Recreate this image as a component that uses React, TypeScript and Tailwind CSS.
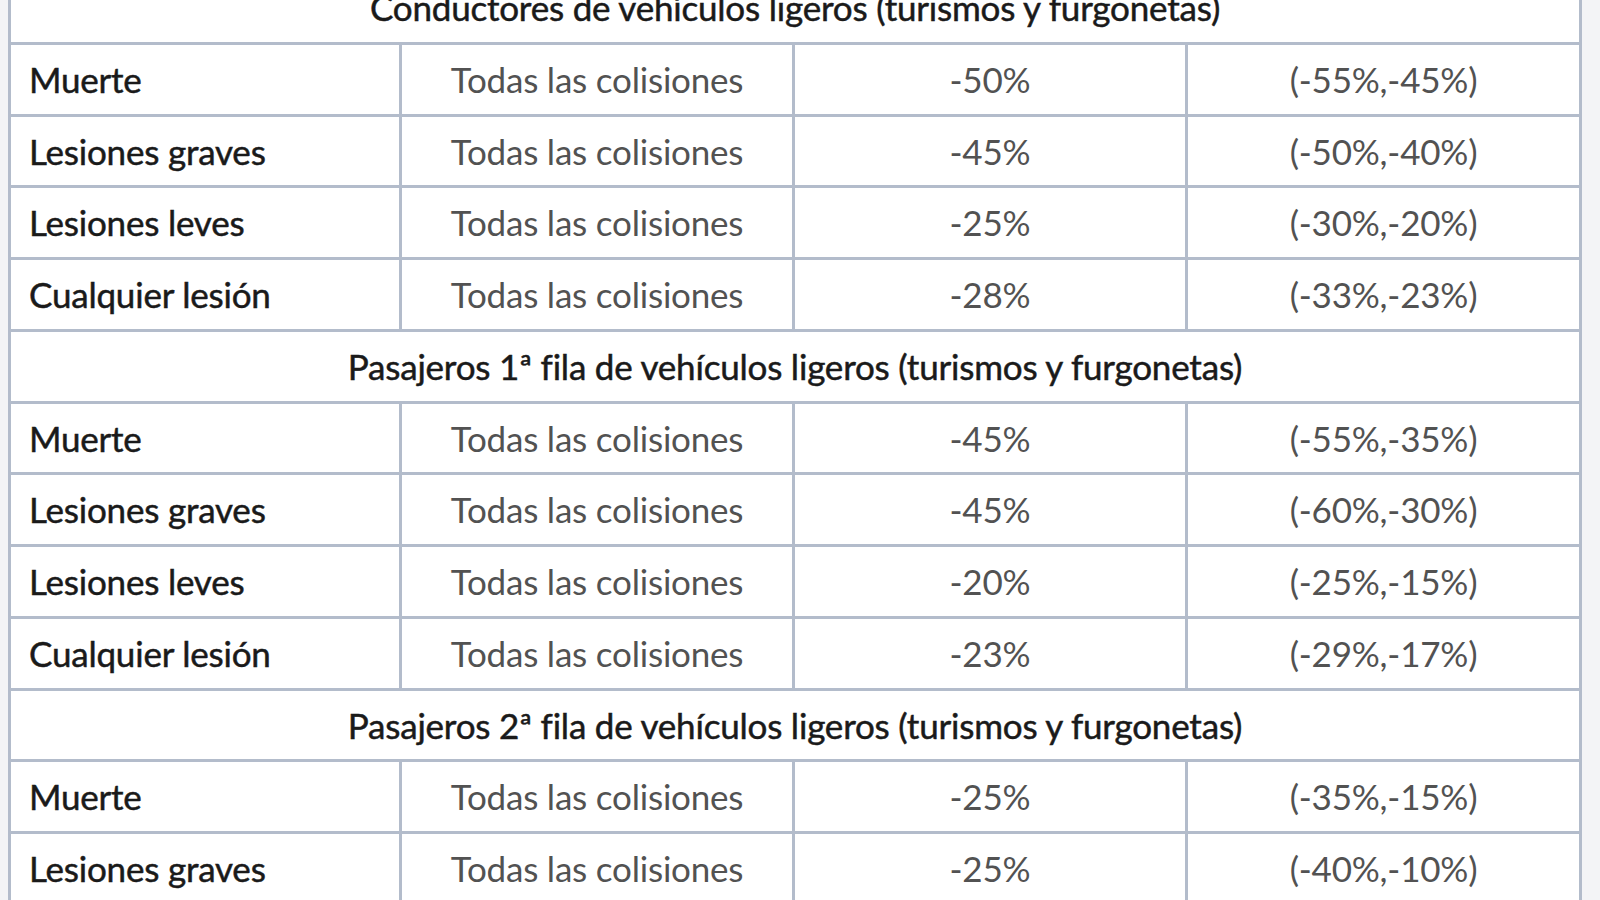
import React from "react";

type Row = { kind: "h"; title: React.ReactNode } | { kind: "d"; a: string; b: string; c: string; d: string };

const rows: Row[] = [
  { kind: "h", title: "Conductores de vehículos ligeros (turismos y furgonetas)" },
  { kind: "d", a: "Muerte", b: "Todas las colisiones", c: "-50%", d: "(-55%,-45%)" },
  { kind: "d", a: "Lesiones graves", b: "Todas las colisiones", c: "-45%", d: "(-50%,-40%)" },
  { kind: "d", a: "Lesiones leves", b: "Todas las colisiones", c: "-25%", d: "(-30%,-20%)" },
  { kind: "d", a: "Cualquier lesión", b: "Todas las colisiones", c: "-28%", d: "(-33%,-23%)" },
  { kind: "h", title: "Pasajeros 1ª fila de vehículos ligeros (turismos y furgonetas)" },
  { kind: "d", a: "Muerte", b: "Todas las colisiones", c: "-45%", d: "(-55%,-35%)" },
  { kind: "d", a: "Lesiones graves", b: "Todas las colisiones", c: "-45%", d: "(-60%,-30%)" },
  { kind: "d", a: "Lesiones leves", b: "Todas las colisiones", c: "-20%", d: "(-25%,-15%)" },
  { kind: "d", a: "Cualquier lesión", b: "Todas las colisiones", c: "-23%", d: "(-29%,-17%)" },
  { kind: "h", title: "Pasajeros 2ª fila de vehículos ligeros (turismos y furgonetas)" },
  { kind: "d", a: "Muerte", b: "Todas las colisiones", c: "-25%", d: "(-35%,-15%)" },
  { kind: "d", a: "Lesiones graves", b: "Todas las colisiones", c: "-25%", d: "(-40%,-10%)" },
];

export default function App() {
  return (
    <div
      className="w-[1600px] h-[900px] overflow-hidden bg-[#f3f4f6]"
      style={{ fontFamily: "Lato, 'Open Sans', sans-serif" }}
    >
      <div className="ml-[8px] w-[1574px] -mt-[27px] bg-white border-x-[3px] border-[#b3bccb]">
        {rows.map((r, i) =>
          r.kind === "h" ? (
            <div
              key={i}
              className="h-[71.75px] border-b-[3px] border-[#b3bccb] flex items-center justify-center text-[35px] tracking-[-0.2px] text-[#1a1a1a] [-webkit-text-stroke:0.5px_#1a1a1a]"
            >
              {r.title}
            </div>
          ) : (
            <div key={i} className="h-[71.75px] border-b-[3px] border-[#b3bccb] grid grid-cols-[391px_393px_393px_1fr]">
              <div className="border-r-[3px] border-[#b3bccb] flex items-center pl-[18px] text-[35px] tracking-[-0.2px] text-[#1a1a1a] [-webkit-text-stroke:0.5px_#1a1a1a]">
                {r.a}
              </div>
              <div className="border-r-[3px] border-[#b3bccb] flex items-center justify-center text-[35px] tracking-[-0.2px] text-[#525252]">
                {r.b}
              </div>
              <div className="border-r-[3px] border-[#b3bccb] flex items-center justify-center text-[35px] tracking-[-0.2px] text-[#525252]">
                {r.c}
              </div>
              <div className="flex items-center justify-center text-[35px] tracking-[-0.2px] text-[#525252]">{r.d}</div>
            </div>
          )
        )}
      </div>
    </div>
  );
}
